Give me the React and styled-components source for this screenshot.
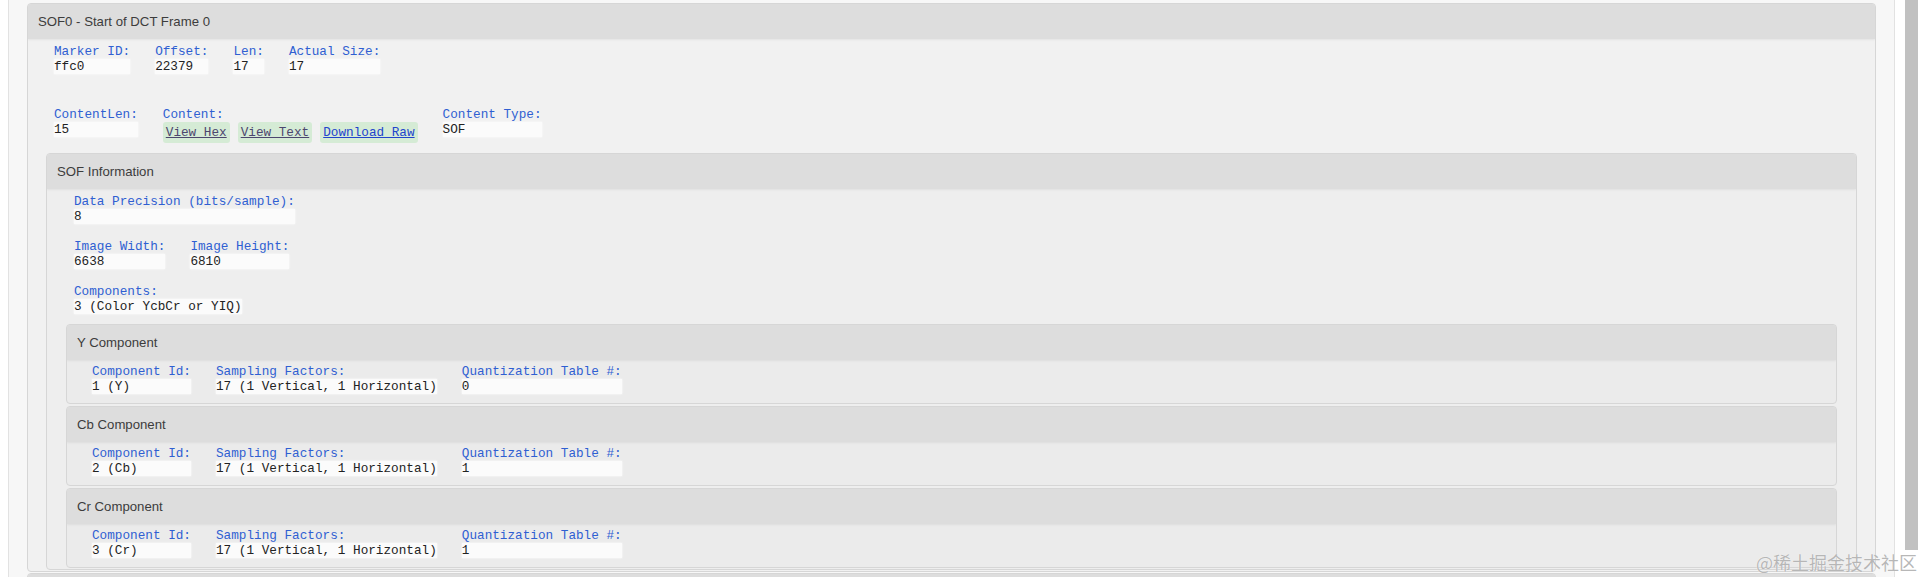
import styled, { createGlobalStyle } from 'styled-components'

const GlobalStyle = createGlobalStyle`
  html, body {
    margin: 0;
    padding: 0;
    background: #fff;
  }
  body {
    font-family: "Liberation Sans", Arial, sans-serif;
  }
`

const Page = styled.div`
  display: flex;
  height: 577px;
  overflow: hidden;
  padding-left: 8px;
  position: relative;
  background: #fff;
`
const Container = styled.div`
  flex: none;
  width: 1887px;
  box-sizing: border-box;
  border-left: 1px solid #e2e2e2;
  border-right: 1px solid #e2e2e2;
  background: #f7f7f7;
  padding: 3px 18px 0;
`
const ScrollTrack = styled.div`
  flex: none;
  width: 13px;
  margin-left: 10px;
`
const ScrollThumb = styled.div`
  height: 550px;
  background: #c1c1c1;
`
const Panel = styled.div`
  border: 1px solid #d6d6d6;
  border-radius: 4px;
  background: ${p => p.$bg};
  margin-top: ${p => p.$mt || 0}px;
  overflow: hidden;
`
const PanelHeader = styled.div`
  height: 35px;
  line-height: 35px;
  padding-left: 10px;
  background: #dddddd;
  color: #3c3c3c;
  font-size: 13.2px;
  box-shadow: 0 1px 2px rgba(0, 0, 0, 0.06);
  position: relative;
`
const PanelBody = styled.div`
  padding: ${p => p.$pt}px ${p => p.$px}px ${p => p.$pb}px;
`
const FieldRow = styled.div`
  display: flex;
  align-items: flex-start;
  gap: 25px;
  margin-left: 8px;
  margin-bottom: ${p => p.$mb || 0}px;
`
const Field = styled.div`
  display: flex;
  flex-direction: column;
  font-family: "Liberation Mono", "Courier New", monospace;
  font-size: 12.7px;
  line-height: 15px;
`
const Label = styled.div`
  color: #2f5fd2;
  white-space: pre;
`
const Value = styled.div`
  color: #222;
  white-space: pre;
  background: ${p => (p.$plain ? 'transparent' : '#fbfbfb')};
  box-shadow: ${p => (p.$plain ? 'none' : '0 0 2px #fdfdfd')};
`
const Buttons = styled.div`
  display: flex;
  gap: 8px;
`
const LinkButton = styled.a`
  display: block;
  padding: 3px 3px;
  background: #d5ebd5;
  border-radius: 3px;
  color: ${p => (p.$visited ? '#4c466e' : '#2244cc')};
  text-decoration: underline;
  cursor: pointer;
`
const Watermark = styled.div`
  position: absolute;
  right: 3px;
  bottom: 4px;
  font-family: "Noto Sans CJK SC", sans-serif;
  font-size: 18px;
  line-height: 22px;
  color: rgba(170, 170, 170, 0.85);
  text-shadow: 0 0 1px #fff;
  pointer-events: none;
`

const Info = ({ label, value, plain, children }) => (
  <Field>
    <Label>{label}</Label>
    <Value $plain={plain}>{children || value}</Value>
  </Field>
)

const components = [
  { name: 'Y Component', id: '1 (Y)', table: '0' },
  { name: 'Cb Component', id: '2 (Cb)', table: '1' },
  { name: 'Cr Component', id: '3 (Cr)', table: '1' },
]

const App = () => (
  <>
    <GlobalStyle />
    <Page>
      <Container>
        <Panel $bg="#f1f1f1">
          <PanelHeader>SOF0 - Start of DCT Frame 0</PanelHeader>
          <PanelBody $pt={5} $px={18} $pb={1}>
            <FieldRow $mb={33}>
              <Info label="Marker ID:" value="ffc0" />
              <Info label="Offset:" value="22379" />
              <Info label="Len:" value="17" />
              <Info label="Actual Size:" value="17" />
            </FieldRow>
            <FieldRow $mb={10}>
              <Info label="ContentLen:" value="15" />
              <Info label="Content:" plain>
                <Buttons>
                  <LinkButton $visited>View Hex</LinkButton>
                  <LinkButton $visited>View Text</LinkButton>
                  <LinkButton>Download Raw</LinkButton>
                </Buttons>
              </Info>
              <Info label="Content Type:" value="SOF" />
            </FieldRow>
            <Panel $bg="#eeeeee">
              <PanelHeader>SOF Information</PanelHeader>
              <PanelBody $pt={5} $px={19} $pb={1}>
                <FieldRow $mb={15}>
                  <Info label="Data Precision (bits/sample):" value="8" />
                </FieldRow>
                <FieldRow $mb={15}>
                  <Info label="Image Width:" value="6638" />
                  <Info label="Image Height:" value="6810" />
                </FieldRow>
                <FieldRow $mb={10}>
                  <Info label="Components:" value="3 (Color YcbCr or YIQ)" />
                </FieldRow>
                {components.map((c, i) => (
                  <Panel key={c.name} $bg="#ebebeb" $mt={i ? 2 : 0}>
                    <PanelHeader>{c.name}</PanelHeader>
                    <PanelBody $pt={4} $px={17} $pb={9}>
                      <FieldRow>
                        <Info label="Component Id:" value={c.id} />
                        <Info label="Sampling Factors:" value="17 (1 Vertical, 1 Horizontal)" />
                        <Info label="Quantization Table #:" value={c.table} />
                      </FieldRow>
                    </PanelBody>
                  </Panel>
                ))}
              </PanelBody>
            </Panel>
          </PanelBody>
        </Panel>
        <Panel $bg="#f1f1f1" $mt={1}>
          <PanelHeader />
        </Panel>
      </Container>
      <ScrollTrack>
        <ScrollThumb />
      </ScrollTrack>
      <Watermark>@稀土掘金技术社区</Watermark>
    </Page>
  </>
)

export default App
